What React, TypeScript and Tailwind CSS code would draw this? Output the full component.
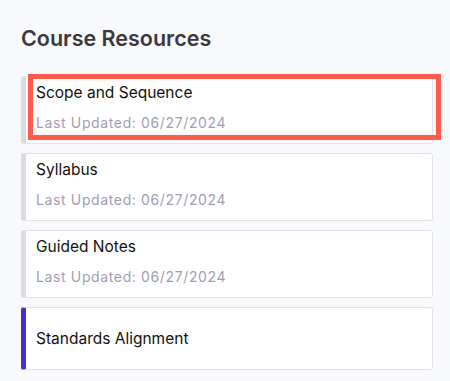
import React from "react";

const resources = [
  { title: "Scope and Sequence", updated: "06/27/2024" },
  { title: "Syllabus", updated: "06/27/2024" },
  { title: "Guided Notes", updated: "06/27/2024" },
];

export default function App() {
  return (
    <div
      className="min-h-[381px] w-[450px] bg-[#f8f9fd] pl-[21px] pt-[24px]"
      style={{ fontFamily: "Inter, 'Noto Sans', sans-serif" }}
    >
      <h1 className="text-[21.5px] leading-[28px] font-semibold text-[#3a3a3c]">
        Course Resources
      </h1>

      <div className="mt-[24px] flex w-[412px] flex-col gap-[9px]">
        {resources.map((r, i) => (
          <div key={r.title} className="relative">
            <div className="rounded-[3px] border border-[#e1e1e6] border-l-[5px] border-l-[#dadadf] bg-white pl-[10px] pt-[5px] pb-[10px]">
              <p className="text-[15.5px] leading-[22px] text-[#111]">{r.title}</p>
              <p className="mt-[9px] text-[14px] leading-[20px] tracking-[0.045em] text-[#a09eb3]">
                Last Updated: {r.updated}
              </p>
            </div>
            {/* highlight box on the first item */}
            {i === 0 && (
              <div className="pointer-events-none absolute left-[7px] top-[-2px] h-[66px] w-[413px] border-[5px] border-[#ff5a4e]" />
            )}
          </div>
        ))}

        <div className="flex h-[63px] items-center rounded-[3px] border border-[#e1e1e6] border-l-[5px] border-l-[#4a2fc8] bg-white pl-[10px]">
          <p className="text-[15.5px] leading-[22px] text-[#111]">Standards Alignment</p>
        </div>
      </div>
    </div>
  );
}
